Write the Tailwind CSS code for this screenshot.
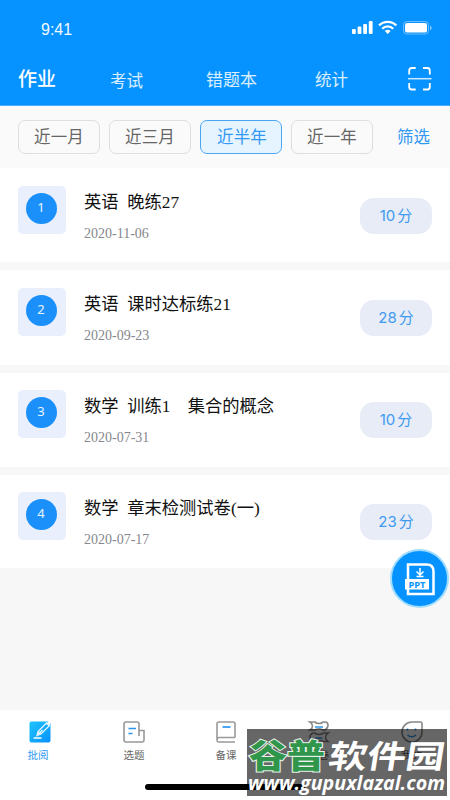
<!DOCTYPE html>
<html lang="zh-CN">
<head>
<meta charset="utf-8">
<title>作业</title>
<script src="https://cdn.jsdelivr.net/npm/@tailwindcss/browser@4"></script>
</head>
<body class="bg-[#f7f7f7]">
<div class="relative flex h-[800px] w-[450px] flex-col overflow-hidden bg-[#f7f7f7] font-['Liberation_Sans','Noto_Sans_CJK_SC',sans-serif]">
  <header class="h-[106px] shrink-0 border-b border-[#4daeff] bg-[#0793ff] text-white">
    <div class="flex h-[53px] items-start justify-between pt-[20px] pr-[18px] pl-[41px]">
      <span class="text-[16px] leading-[20px] opacity-95">9:41</span>
      <svg class="h-[16px] w-[81px]" viewBox="0 0 81 16" fill="#fff">
        <rect x="1" y="9" width="3.8" height="5" rx="1"/><rect x="6.6" y="6.5" width="3.8" height="7.5" rx="1"/><rect x="12.2" y="4" width="3.8" height="10" rx="1"/><rect x="17.8" y="1" width="3.8" height="13" rx="1"/>
        <g fill="none" stroke="#fff" stroke-width="2.3"><path d="M28.1 5.4a12.2 12.2 0 0 1 17.2 0"/><path d="M31.2 8.7a7.8 7.8 0 0 1 11 0"/></g>
        <path d="M36.7 14l-2.9-3a4.3 4.3 0 0 1 5.8 0z"/>
        <rect x="52.5" y="1.5" width="25" height="12.5" rx="3.4" fill="none" stroke="#fff" stroke-opacity=".4"/>
        <rect x="54" y="3" width="22" height="9.5" rx="2"/><path d="M79 5.8c2.2.7 2.2 3.8 0 4.5z" opacity=".5"/>
      </svg>
    </div>
    <nav class="flex h-[52px] items-center pl-[18px] text-[16.5px] leading-[24px] text-white/85">
      <span class="w-[92px] pt-[2px] text-[19px] font-medium text-white">作业</span>
      <span class="w-[96px] pt-[3px]">考试</span>
      <span class="w-[109px] pt-[3px] text-[17px]">错题本</span>
      <span class="w-[92px] pt-[2px]">统计</span>
      <svg class="h-[26px] w-[26px]" viewBox="0 0 26 26" fill="none" stroke="#fff" stroke-width="1.8"><path d="M2.2 8.5v-4q0-2.5 2.5-2.5h4M16 2h4.3q2.5 0 2.5 2.5v4M2.2 17v4q0 2.5 2.5 2.5h4M16 23.500h4.3q2.500 0 2.500-2.500v-4"/><path d="M1 12.700h23.500" stroke-width="1.500" opacity=".8"/></svg>
    </nav>
  </header>

  <section class="flex h-[62px] shrink-0 items-start gap-[9px] bg-[#fafafa] pt-[14px] pl-[18px] text-[16.500px] leading-[33px] text-[#666]">
    <div class="h-[34px] w-[82px] rounded-[7px] border border-[#dedede] text-center tracking-[.2px]">近一月</div>
    <div class="h-[34px] w-[82px] rounded-[7px] border border-[#dedede] text-center tracking-[.2px]">近三月</div>
    <div class="h-[34px] w-[82px] rounded-[7px] border border-[#4aa6f5] bg-[#e6f4ff] pl-[2px] text-center tracking-[.2px] text-[#3198f4]">近半年</div>
    <div class="h-[34px] w-[82px] rounded-[7px] border border-[#dedede] text-center tracking-[.2px]">近一年</div>
    <span class="ml-[15px] pt-px text-[#3198f4]">筛选</span>
  </section>

  <main class="flex shrink-0 flex-col gap-[8px]">
    <article class="flex h-[94px] items-start bg-white pt-[18px] pl-[18px]">
      <div class="flex h-[48px] w-[48px] items-start justify-center rounded-[5px] bg-[#e9effc] pt-[7px] pr-[2px]"><span class="h-[31px] w-[31px] rounded-full bg-[#1b90fa] text-center font-['Noto_Sans'] text-[13px] leading-[29px] text-white/90">1</span></div>
      <div class="ml-[18px] w-[276px] font-['Liberation_Serif','Noto_Sans_CJK_SC',serif]">
        <h2 class="mt-[5px] text-[17.300px] leading-[24px] whitespace-pre text-[#111]">英语&#8194;晚练27</h2>
        <p class="mt-[11px] text-[14px] leading-[16px] text-[#85888d]">2020-11-06</p>
      </div>
      <div class="mt-[12px] h-[36px] w-[72px] rounded-[14px] bg-[#e7ecf6] text-center font-['Inter','Noto_Sans_CJK_SC',sans-serif] text-[15px] leading-[36px] text-[#3e9af0]">10<span class="ml-[2px]">分</span></div>
    </article>
    <article class="flex h-[95px] items-start bg-white pt-[18px] pl-[18px]">
      <div class="flex h-[48px] w-[48px] items-start justify-center rounded-[5px] bg-[#e9effc] pt-[7px] pr-[2px]"><span class="h-[31px] w-[31px] rounded-full bg-[#1b90fa] text-center font-['Noto_Sans'] text-[13px] leading-[29px] text-white/90">2</span></div>
      <div class="ml-[18px] w-[276px] font-['Liberation_Serif','Noto_Sans_CJK_SC',serif]">
        <h2 class="mt-[5px] text-[17.300px] leading-[24px] whitespace-pre text-[#111]">英语&#8194;课时达标练21</h2>
        <p class="mt-[11px] text-[14px] leading-[16px] text-[#85888d]">2020-09-23</p>
      </div>
      <div class="mt-[12px] h-[36px] w-[72px] rounded-[14px] bg-[#e7ecf6] text-center font-['Inter','Noto_Sans_CJK_SC',sans-serif] text-[15px] leading-[36px] text-[#3e9af0]">28<span class="ml-[2px]">分</span></div>
    </article>
    <article class="flex h-[94px] items-start bg-white pt-[17px] pl-[18px]">
      <div class="flex h-[48px] w-[48px] items-start justify-center rounded-[5px] bg-[#e9effc] pt-[7px] pr-[2px]"><span class="h-[31px] w-[31px] rounded-full bg-[#1b90fa] text-center font-['Noto_Sans'] text-[13px] leading-[29px] text-white/90">3</span></div>
      <div class="ml-[18px] w-[276px] font-['Liberation_Serif','Noto_Sans_CJK_SC',serif]">
        <h2 class="mt-[5px] text-[17.300px] leading-[24px] whitespace-pre text-[#111]">数学&#8194;训练1&#12288;集合的概念</h2>
        <p class="mt-[11px] text-[14px] leading-[16px] text-[#85888d]">2020-07-31</p>
      </div>
      <div class="mt-[12px] h-[36px] w-[72px] rounded-[14px] bg-[#e7ecf6] text-center font-['Inter','Noto_Sans_CJK_SC',sans-serif] text-[15px] leading-[36px] text-[#3e9af0]">10<span class="ml-[2px]">分</span></div>
    </article>
    <article class="flex h-[93px] items-start bg-white pt-[17px] pl-[18px]">
      <div class="flex h-[48px] w-[48px] items-start justify-center rounded-[5px] bg-[#e9effc] pt-[7px] pr-[2px]"><span class="h-[31px] w-[31px] rounded-full bg-[#1b90fa] text-center font-['Noto_Sans'] text-[13px] leading-[29px] text-white/90">4</span></div>
      <div class="ml-[18px] w-[276px] font-['Liberation_Serif','Noto_Sans_CJK_SC',serif]">
        <h2 class="mt-[5px] text-[17.300px] leading-[24px] whitespace-pre text-[#111]">数学&#8194;章末检测试卷(一)</h2>
        <p class="mt-[11px] text-[14px] leading-[16px] text-[#85888d]">2020-07-17</p>
      </div>
      <div class="mt-[12px] h-[36px] w-[72px] rounded-[14px] bg-[#e7ecf6] text-center font-['Inter','Noto_Sans_CJK_SC',sans-serif] text-[15px] leading-[36px] text-[#3e9af0]">23<span class="ml-[2px]">分</span></div>
    </article>
  </main>

  <footer class="mt-auto flex h-[90px] shrink-0 flex-col bg-white">
    <nav class="grid h-[74px] grid-cols-[76px_116px_68px_117px_69px] pt-[10px] text-center text-[10.500px] leading-[16px] text-[#666]">
      <div class="flex flex-col items-center text-[#3198f4]">
        <svg class="ml-[3px] h-[24px] w-[24px]" viewBox="0 0 24 24" fill="none"><defs><linearGradient id="g" x1="0" y1="0" x2="1" y2="1"><stop stop-color="#1fc4fb"/><stop offset="1" stop-color="#0791ff"/></linearGradient></defs><rect x="1.500" y="1.500" width="21" height="21" rx="2" fill="url(#g)"/><path d="M23 .5L19.500 5" stroke="#fff" stroke-width="3"/><path d="M9 15.500l1-4L18.500 3l3 2.500-8.500 8.500zM10 11.500l3 2.500M8.500 16l6-6" stroke="#dff5ff" stroke-width="1.300"/><path d="M5.500 18h8" stroke="#fff" stroke-width="1.500"/></svg>
        <span class="mt-[3px]">批阅</span>
      </div>
      <div class="flex flex-col items-center">
        <svg class="h-[24px] w-[24px]" viewBox="0 0 24 24" fill="none" stroke="#999" stroke-width="1.600"><path d="M20 22H4q-2 0-2-2V4q0-2 2-2h11q2 0 2 2v12M20 22q2 0 2-2v-9.500h-5"/><path d="M6.500 8.500H14M6.500 13.500h4" stroke="#2c95ee" stroke-width="1.700"/></svg>
        <span class="mt-[3px]">选题</span>
      </div>
      <div class="flex flex-col items-center">
        <svg class="h-[24px] w-[24px]" viewBox="0 0 24 24" fill="none" stroke="#999" stroke-width="1.600"><path d="M21 17.500V4q0-2-2-2H5Q3 2 3 4v15M21 17.500H5q-2 0-2 2.300T5 22h16"/><path d="M8.500 7h8" stroke="#2c95ee" stroke-width="1.700"/></svg>
        <span class="mt-[3px]">备课</span>
      </div>
      <div class="flex flex-col items-center">
        <svg class="h-[24px] w-[24px]" viewBox="0 0 24 24" fill="none" stroke="#888" stroke-width="1.600"><path d="M3 2h5q1 1.500 4 1.500T16 2h2q3 0 3 3t-3 5h-2q-1-1.300-4-1.300T8 10H3q2.500-1.500 2.500-4T3 2zM6 13h2q1 1.500 4 1.500t4-1.500h5q-2.500 1.500-2.500 4t2.500 4.500h-5q-1-1.300-4-1.300t-4 1.300H6q-3-1-3-4.300T6 13z"/><path d="M8 7h8M8.500 18h7" stroke="#2c95ee" stroke-width="1.700"/></svg>
        <span class="mt-[3px]">组卷</span>
      </div>
      <div class="flex flex-col items-center">
        <svg class="h-[24px] w-[24px]" viewBox="0 0 24 24" fill="none" stroke="#888" stroke-width="1.600"><path d="M12 2h8.500q1.500 0 1.500 1.500V12A10 10 0 1 1 12 2z"/><path d="M7.500 8.500v2M15.500 8.500v2M7.500 15q4.200 3.500 8.500 0" stroke="#2c95ee"/></svg>
        <span class="mt-[3px]">我的</span>
      </div>
    </nav>
    <div class="ml-[145px] h-[6px] w-[160px] rounded-full bg-black"></div>
  </footer>

  <div class="absolute top-[549px] left-[390px] h-[59px] w-[59px] rounded-full border-2 border-[#a0dcff] bg-[#0793ff]">
    <svg class="h-[55px] w-[55px]" viewBox="0 0 55 55" fill="none" stroke="#fff"><path d="M16 28V13.500h18.500q7 0 7 7V43H16v-5" stroke-width="2.500"/><path d="M28 17v6.500M24.500 20.500l3.500 3.500 3.500-3.500M24.500 25.500h7" stroke-width="1.500"/><rect x="13" y="28" width="24" height="10.500" fill="#fff" stroke="none"/><text x="16.500" y="36.600" textLength="17" lengthAdjust="spacingAndGlyphs" fill="#0793ff" stroke="none" font-family="Noto Sans" font-weight="700" font-size="9.500">PPT</text></svg>
  </div>

  <div class="absolute top-[729px] left-[247px] h-[67px] w-[200px] bg-black/60">
    <svg class="h-[67px] w-[200px] overflow-visible" viewBox="0 0 200 67" font-family="Noto Sans CJK SC, sans-serif">
      <text x="2" y="39" font-size="33" font-weight="900" textLength="76" lengthAdjust="spacingAndGlyphs" fill="#2f964c" stroke="#e9f3eb" stroke-width="2" paint-order="stroke">谷普</text>
      <text transform="translate(80 39) skewX(-9)" x="0" y="0" font-size="32" font-weight="700" textLength="116" lengthAdjust="spacingAndGlyphs" fill="#fff">软件园</text>
      <text x="1" y="60.500" font-family="Open Sans, sans-serif" font-style="italic" font-weight="700" font-size="20" textLength="197" lengthAdjust="spacingAndGlyphs" fill="#fff">www.gupuxlazal.com</text>
    </svg>
  </div>
</div>
</body>
</html>
